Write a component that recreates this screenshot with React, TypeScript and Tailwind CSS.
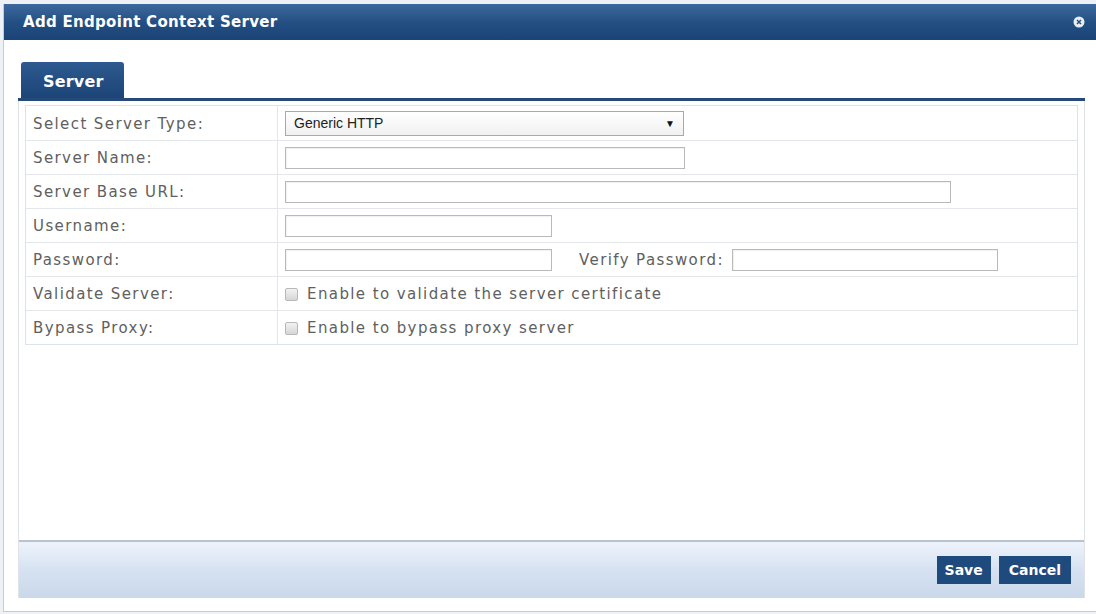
import React from 'react';

const rows = [
  'Select Server Type:',
  'Server Name:',
  'Server Base URL:',
  'Username:',
  'Password:',
  'Validate Server:',
  'Bypass Proxy:',
];

function TextBox({ w }: { w: string }) {
  return <div className={`h-[22px] ${w} border border-[#b9b9b9] bg-white shadow-[inset_1px_1px_1px_rgba(0,0,0,0.06)]`} />;
}

function Check({ label }: { label: string }) {
  return (
    <div className="flex items-center gap-[9px]">
      <div className="w-[13px] h-[13px] rounded-[2px] border border-[#b8b8b8] bg-gradient-to-b from-[#f2f2f2] to-[#d6d6d6]" />
      <span>{label}</span>
    </div>
  );
}

export default function App() {
  const cell = (i: number) => {
    switch (i) {
      case 0:
        return (
          <div className="h-[25px] w-[399px] border border-[#a9a9a9] bg-gradient-to-b from-white to-[#f1f1f1] flex items-center justify-between pl-[8px] pr-[8px] text-[14px] tracking-normal text-[#222] font-['Liberation_Sans',sans-serif]">
            <span>Generic HTTP</span>
            <span className="text-[10px] text-[#111]">▼</span>
          </div>
        );
      case 1:
        return <TextBox w="w-[400px]" />;
      case 2:
        return <TextBox w="w-[666px]" />;
      case 3:
        return <TextBox w="w-[267px]" />;
      case 4:
        return (
          <div className="flex items-center">
            <TextBox w="w-[267px]" />
            <span className="ml-[27px] mr-[8px]">Verify Password:</span>
            <TextBox w="w-[266px]" />
          </div>
        );
      case 5:
        return <Check label="Enable to validate the server certificate" />;
      default:
        return <Check label="Enable to bypass proxy server" />;
    }
  };

  return (
    <div className="w-[1096px] h-[614px] bg-[#eef1f5] pt-[4px] pl-[3px] font-['DejaVu_Sans',Verdana,sans-serif]">
      <div className="w-[1093px] h-[608px] bg-white border-b border-l border-[#c5ccd6] flex flex-col">
        {/* title bar */}
        <div className="h-[36px] bg-gradient-to-b from-[#3d6a9e] via-[#244f83] to-[#1b4476] flex items-center justify-between pl-[19px] pr-[11px]">
          <span className="text-white font-bold text-[15px] tracking-[0.3px]">Add Endpoint Context Server</span>
          <svg width="12" height="12" viewBox="0 0 12 12">
            <circle cx="6" cy="6" r="5.5" fill="#e8edf3" />
            <path d="M4 4 L8 8 M8 4 L4 8" stroke="#2a4e7c" strokeWidth="1.5" />
          </svg>
        </div>

        <div className="flex-1 flex flex-col pl-[14px] pr-[11px] pt-[22px] pb-[13px]">
          {/* tab */}
          <div className="ml-[3px] w-[103px] h-[36px] rounded-t-[3px] bg-gradient-to-b from-[#2d5a8f] to-[#1c4477] flex items-center pl-[22px] pt-[4px] text-white font-bold text-[16px] tracking-[0.2px]">
            Server
          </div>
          <div className="h-[3px] bg-[#24497a]" />

          <div className="flex-1 flex flex-col border-x border-[#dfe3e8]">
            <div className="flex-1 pt-[4px] pl-[6px] pr-[6px]">
              <div className="border border-[#dde3ea] text-[15px] tracking-[1.4px] text-[#606060]">
                {rows.map((r, i) => (
                  <div key={r} className={`flex h-[34px] ${i > 0 ? 'border-t border-[#e3e7ec]' : ''}`}>
                    <div className="w-[252px] border-r border-[#e3e7ec] flex items-center pl-[7px] pt-[2px]">{r}</div>
                    <div className="flex-1 flex items-center pl-[7px] pt-[1px]">{cell(i)}</div>
                  </div>
                ))}
              </div>
            </div>

            {/* footer */}
            <div className="h-[58px] border-t-2 border-[#b9c2cf] bg-gradient-to-b from-[#eef3fb] via-[#d6e2f1] to-[#c9d8ea] flex items-center justify-end gap-[8px] pr-[13px]">
              <button className="h-[28px] px-[8px] bg-[#1f4a7d] text-white font-bold text-[14px]">Save</button>
              <button className="h-[28px] px-[10px] bg-[#1f4a7d] text-white font-bold text-[14px]">Cancel</button>
            </div>
          </div>
        </div>
      </div>
    </div>
  );
}
